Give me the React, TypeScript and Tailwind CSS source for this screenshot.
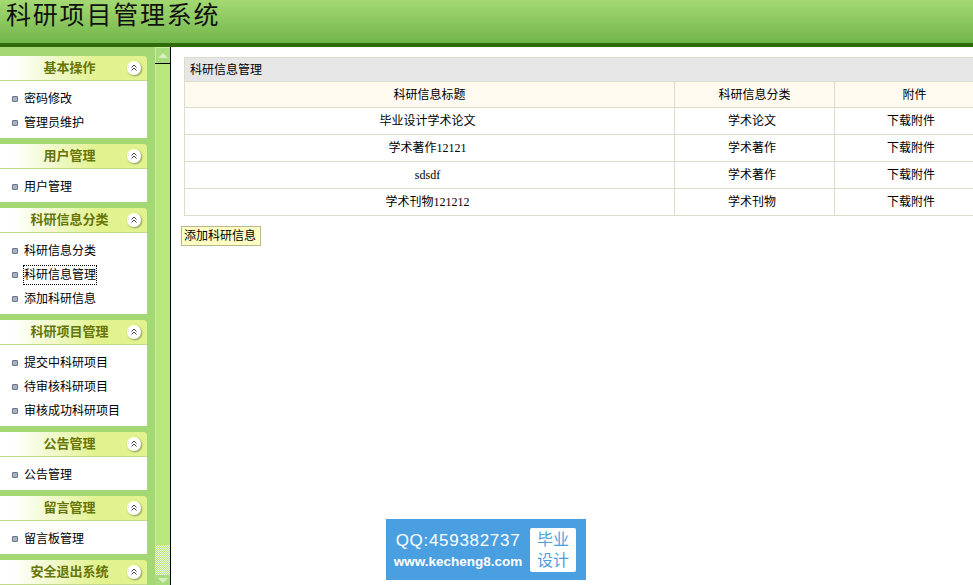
const serifStack = "font-['Liberation_Serif','Noto_Sans_CJK_SC',serif]";

const menus = [
  { title: "基本操作", items: ["密码修改", "管理员维护"] },
  { title: "用户管理", items: ["用户管理"] },
  { title: "科研信息分类", items: ["科研信息分类", "科研信息管理", "添加科研信息"] },
  { title: "科研项目管理", items: ["提交中科研项目", "待审核科研项目", "审核成功科研项目"] },
  { title: "公告管理", items: ["公告管理"] },
  { title: "留言管理", items: ["留言板管理"] },
  { title: "安全退出系统", items: [] as string[] },
];

const rows = [
  ["毕业设计学术论文", "学术论文"],
  ["学术著作12121", "学术著作"],
  ["sdsdf", "学术著作"],
  ["学术刊物121212", "学术刊物"],
];

function MenuGroup({ title, items }: { title: string; items: string[] }) {
  return (
    <div className="mb-[6px] w-[147px] shrink-0">
      <div className="flex h-[25px] items-center rounded-tr-[4px] border-b border-[#c4d88c] bg-gradient-to-r from-white from-[8%] to-[#e2f28f] to-[65%]">
        <span className="flex-1 pl-[12px] text-center text-[13px] font-bold text-[#667508]">{title}</span>
        <span className="mr-[6px] flex h-[14px] w-[14px] items-center justify-center rounded-full bg-white shadow-[1px_1px_2px_#8a9a60]">
          <svg width="8" height="8" viewBox="0 0 8 8" fill="none" stroke="#444" strokeWidth="1">
            <path d="M1.5 3.5 4 1l2.5 2.5M1.5 6.5 4 4l2.5 2.5" />
          </svg>
        </span>
      </div>
      {items.length > 0 && (
        <ul className="bg-white pt-[6px] pb-[3px]">
          {items.map((item) => (
            <li key={item} className="flex h-[24px] items-center pl-[12px] text-[12px] text-black">
              <span className="mr-[6px] h-[6px] w-[6px] rounded-[1px] border border-[#67758a] bg-[#aab4c0]" />
              <span className={item === "科研信息管理" ? "outline-1 outline-dotted outline-black" : ""}>{item}</span>
            </li>
          ))}
        </ul>
      )}
    </div>
  );
}

export default function App() {
  return (
    <div className={`flex h-[585px] w-[973px] flex-col overflow-hidden bg-white ${serifStack}`}>
      <header className="h-[47px] shrink-0 border-b-[4px] border-[#2f6a0b] bg-gradient-to-b from-[#a4d972] to-[#71b64a] pl-[6px]">
        <h1 className="text-[25px] leading-[32px] font-normal tracking-[1.8px] whitespace-nowrap text-[#111]">科研项目管理系统</h1>
      </header>

      <div className="flex min-h-0 flex-1">
        <aside className="flex w-[155px] shrink-0 flex-col overflow-hidden bg-[#a3d875] pt-[9px]">
          {menus.map((m) => (
            <MenuGroup key={m.title} title={m.title} items={m.items} />
          ))}
        </aside>

        <div className="flex w-[16px] shrink-0 flex-col border-r border-black bg-[#b8e87c]">
          <div className="flex h-[17px] items-center justify-center border-b border-black bg-[#a8dc7c] shadow-[inset_1px_1px_0_#c5ec9a]">
            <span className="h-0 w-0 border-x-[5px] border-b-[5px] border-x-transparent border-b-[#d8f0c0]" />
          </div>
          <div className="flex-1 shadow-[inset_1px_0_0_#c5ec9a]" />
          <div className="h-[30px] bg-[repeating-conic-gradient(#b8e87c_0_25%,#eef7e2_0_50%)] bg-[length:2px_2px]" />
          <div className="flex h-[10px] items-center justify-center bg-[#a8dc7c]">
            <span className="h-0 w-0 border-x-[5px] border-t-[5px] border-x-transparent border-t-[#d8f0c0]" />
          </div>
        </div>

        <main className="relative min-w-0 flex-1 pt-[10px] pl-[13px]">
          <table className="w-[811px] table-fixed border-collapse text-[12px] text-black">
            <colgroup>
              <col className="w-[490px]" />
              <col className="w-[160px]" />
              <col />
            </colgroup>
            <thead>
              <tr>
                <th colSpan={3} className="h-[24px] border border-[#dddcc8] bg-[#e6e6e6] pl-[5px] text-left font-normal">
                  科研信息管理
                </th>
              </tr>
              <tr className="bg-[#fffaf0]">
                <th className="h-[26px] border border-[#dddcc8] font-normal">科研信息标题</th>
                <th className="border border-[#dddcc8] font-normal">科研信息分类</th>
                <th className="border border-[#dddcc8] font-normal">附件</th>
              </tr>
            </thead>
            <tbody>
              {rows.map((r) => (
                <tr key={r[0]}>
                  <td className="h-[27px] border border-[#dddcc8] pr-[4px] text-center">{r[0]}</td>
                  <td className="border border-[#dddcc8] pr-[5px] text-center">{r[1]}</td>
                  <td className="border border-[#dddcc8] pr-[7px] text-center">下载附件</td>
                </tr>
              ))}
            </tbody>
          </table>

          <button className="mt-[10px] -ml-[3px] h-[20px] w-[80px] border border-[#b9b98a] bg-[#ffffc4] pr-[2px] text-[12px] text-black">
            添加科研信息
          </button>

          <div className="absolute top-[472px] left-[215px] flex h-[61px] w-[200px] items-center bg-[#4a9fe0] pl-[7px] text-white">
            <div className="flex w-[130px] flex-col items-center font-['Liberation_Sans',sans-serif]">
              <span className="text-[17px] leading-[24px] tracking-[0.7px]">QQ:459382737</span>
              <span className="text-[13.5px] leading-[18px] font-bold">www.kecheng8.com</span>
            </div>
            <div className="ml-[7px] flex h-[44px] w-[46px] items-center justify-center rounded-[2px] bg-white text-center text-[16px] leading-[21px] text-[#4a9fe0]">
              毕业<br />设计
            </div>
          </div>
        </main>
      </div>
    </div>
  );
}
